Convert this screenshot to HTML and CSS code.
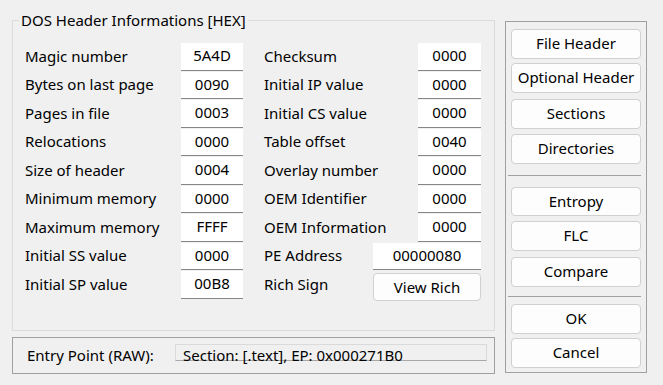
FILE: index.html
```html
<!DOCTYPE html>
<html>
<head>
<meta charset="utf-8">
<link rel="stylesheet" href="styles.css">
</head>
<body>
<div class="dialog">
  <div class="main">
    <fieldset class="group">
      <legend>DOS Header Informations [HEX]</legend>
      <div class="cols">
        <div class="col col-left">
          <div class="lbl">Magic number</div><div class="fld">5A4D</div>
          <div class="lbl">Bytes on last page</div><div class="fld">0090</div>
          <div class="lbl">Pages in file</div><div class="fld">0003</div>
          <div class="lbl">Relocations</div><div class="fld">0000</div>
          <div class="lbl">Size of header</div><div class="fld">0004</div>
          <div class="lbl">Minimum memory</div><div class="fld">0000</div>
          <div class="lbl">Maximum memory</div><div class="fld">FFFF</div>
          <div class="lbl">Initial SS value</div><div class="fld">0000</div>
          <div class="lbl">Initial SP value</div><div class="fld">00B8</div>
        </div>
        <div class="col col-right">
          <div class="lbl span2">Checksum</div><div class="fld">0000</div>
          <div class="lbl span2">Initial IP value</div><div class="fld">0000</div>
          <div class="lbl span2">Initial CS value</div><div class="fld">0000</div>
          <div class="lbl span2">Table offset</div><div class="fld">0040</div>
          <div class="lbl span2">Overlay number</div><div class="fld">0000</div>
          <div class="lbl span2">OEM Identifier</div><div class="fld">0000</div>
          <div class="lbl span2">OEM Information</div><div class="fld">0000</div>
          <div class="lbl">PE Address</div><div class="fld wide">00000080</div>
          <div class="lbl">Rich Sign</div><div class="btn wide rich">View Rich</div>
        </div>
      </div>
    </fieldset>
    <div class="entry">
      <span class="entry-label">Entry Point (RAW):</span>
      <div class="entry-field">Section: [.text], EP: 0x000271B0</div>
    </div>
  </div>
  <div class="panel">
    <div class="btn">File Header</div>
    <div class="btn g4">Optional Header</div>
    <div class="btn g6">Sections</div>
    <div class="btn g5">Directories</div>
    <div class="sep sep1"></div>
    <div class="btn">Entropy</div>
    <div class="btn g5">FLC</div>
    <div class="btn g6">Compare</div>
    <div class="sep sep2"></div>
    <div class="btn">OK</div>
    <div class="btn g4">Cancel</div>
  </div>
</div>
</body>
</html>
```

FILE: styles.css
```css
html, body {
  margin: 0;
  padding: 0;
  background: #f0f0f0;
}
body {
  font-family: "Noto Sans", "Open Sans", sans-serif;
  font-size: 15px;
  color: #000;
  width: 663px;
  height: 385px;
  overflow: hidden;
}
.dialog {
  display: flex;
  align-items: flex-start;
  padding: 10px 0 0 12px;
  gap: 10px;
}
.main {
  width: 483px;
}
.group {
  box-sizing: border-box;
  height: 321px;
  margin: 0;
  padding: 13px 12px 0 12px;
  border: 1px solid #dcdcdc;
  min-width: 0;
}
.group legend {
  padding: 0 2px;
  margin-left: -6px;
  line-height: 20px;
}
.cols {
  display: flex;
}
.col {
  display: grid;
  grid-auto-rows: 27.5px;
  row-gap: 1px;
}
.col-left {
  grid-template-columns: 156px 62px;
}
.col-right {
  margin-left: 21px;
  grid-template-columns: 109px 45px 63px;
}
.lbl {
  display: flex;
  align-items: center;
  padding-bottom: 2px;
  white-space: nowrap;
}
.span2 {
  grid-column: 1 / 3;
}
.fld {
  box-sizing: border-box;
  background: #fff;
  border-bottom: 1px solid #868686;
  text-align: center;
  line-height: 25px;
}
.wide {
  grid-column: 2 / 4;
}
.btn {
  box-sizing: border-box;
  height: 30px;
  border: 1px solid #d0d0d0;
  border-radius: 4px;
  background: #fdfdfd;
  text-align: center;
  line-height: 27px;
}
.rich {
  height: 28px;
  margin-top: 2px;
  line-height: 26px;
}
.entry {
  box-sizing: border-box;
  height: 37px;
  margin-top: 6px;
  border: 1px solid #a0a0a0;
  display: flex;
  align-items: flex-start;
  padding-left: 14px;
}
.entry-label {
  width: 148px;
  line-height: 35px;
}
.entry-field {
  box-sizing: border-box;
  width: 312px;
  height: 17px;
  margin-top: 6px;
  border: 1px solid #dadada;
  border-bottom-color: #a8a8a8;
  background: #f0f0f0;
  padding-left: 7px;
  line-height: 21px;
  white-space: nowrap;
}
.panel {
  box-sizing: border-box;
  width: 142px;
  height: 352px;
  margin-top: 11px;
  border: 1px solid #a0a0a0;
  padding: 7px 5px 4px 5px;
  display: flex;
  flex-direction: column;
}
.g4 { margin-top: 4px; }
.g5 { margin-top: 5px; }
.g6 { margin-top: 6px; }
.sep {
  height: 1px;
  background: #a0a0a0;
  margin-left: -3px;
}
.sep1 { margin-top: 11px; margin-bottom: 11px; }
.sep2 { margin-top: 9px; margin-bottom: 7px; }
```
